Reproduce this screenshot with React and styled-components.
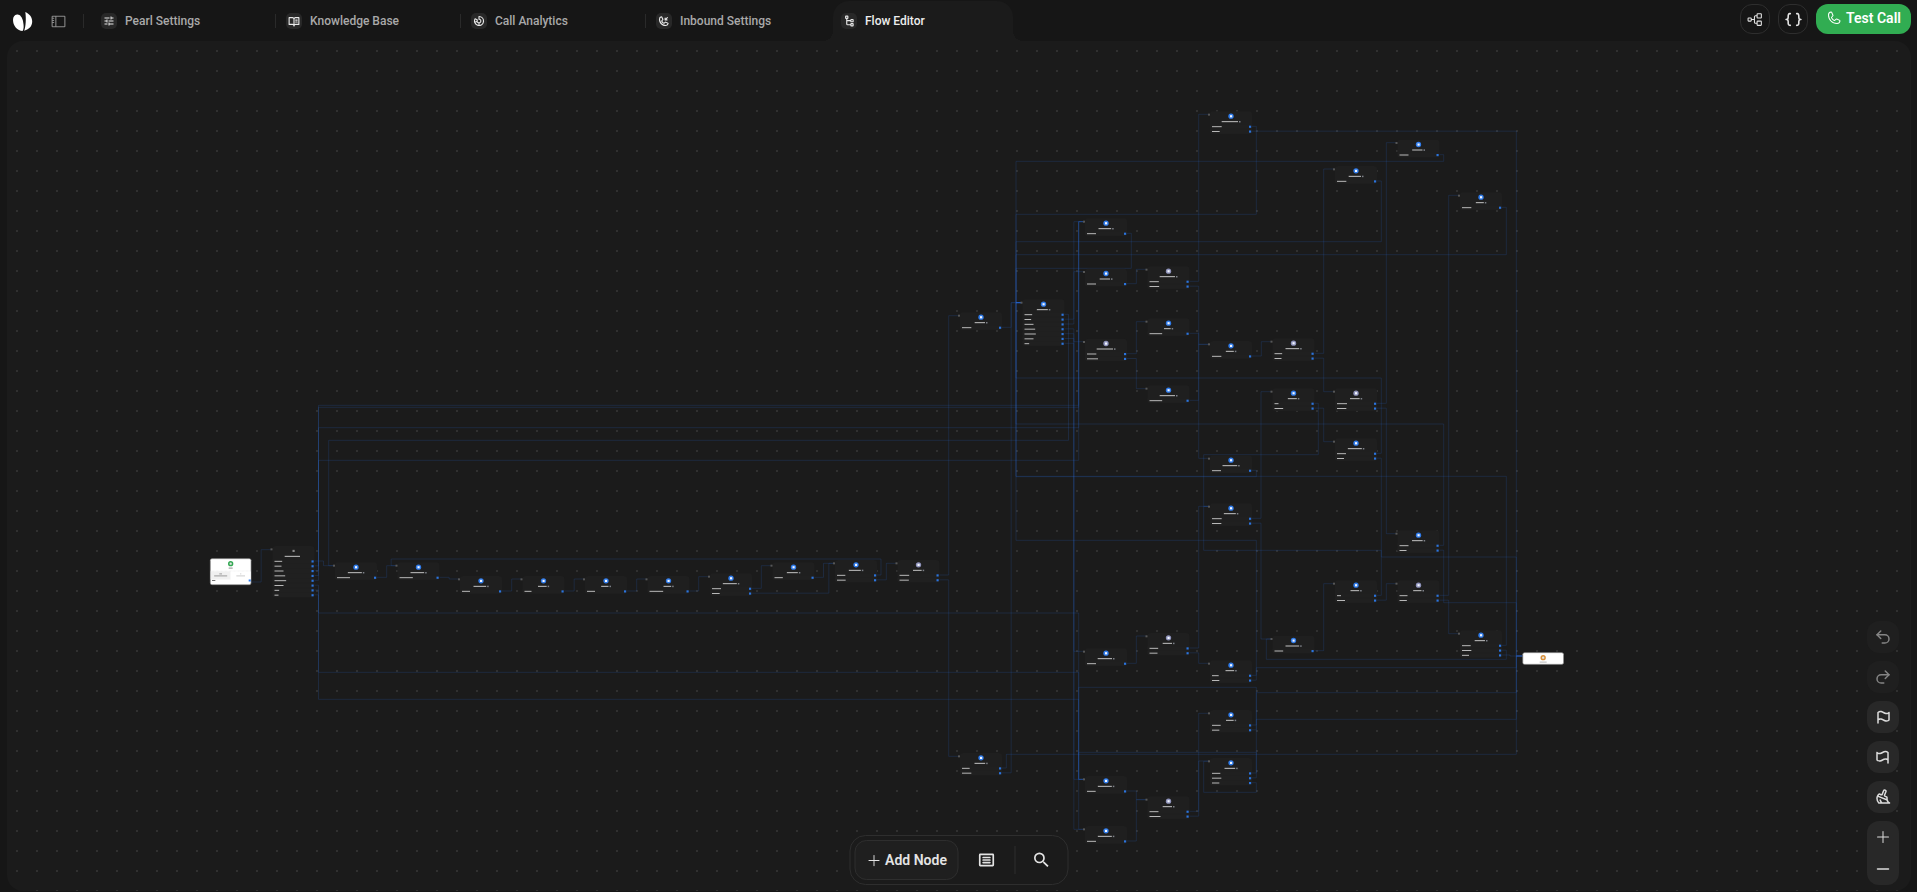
import React from 'react'
import styled, { createGlobalStyle, css } from 'styled-components'
import {
  PiArticleBold,
  PiBookOpenTextBold,
  PiBracketsCurlyBold,
  PiBroomBold,
  PiChartDonutBold,
  PiFlagBold,
  PiMinusBold,
  PiPhone,
  PiPhoneIncomingBold,
  PiPlus,
  PiSidebar,
  PiTreeStructure,
  PiTreeViewBold,
} from 'react-icons/pi'
import { MdSearch, MdTune } from 'react-icons/md'
import { LuRedo2, LuUndo2 } from 'react-icons/lu'

const GlobalStyle = createGlobalStyle`
  * {
    box-sizing: border-box;
  }
  body {
    margin: 0;
    background: #161616;
    color: #e4e4e4;
    font-family: Roboto, 'Liberation Sans', sans-serif;
  }
  button {
    font-family: inherit;
    color: inherit;
    padding: 0;
    border: 0;
    cursor: pointer;
  }
`

const Page = styled.div`
  display: flex;
  flex-direction: column;
  height: 100vh;
  padding: 0 6px 1px 7px;
`

const Header = styled.header`
  display: flex;
  align-items: flex-start;
  height: 41px;
`

const Brand = styled.a`
  display: flex;
  margin: 11px 0 0 5px;
  color: #fff;
`

const SidebarToggle = styled.button`
  display: flex;
  margin: 13px 16px 0 17px;
  background: none;
  color: #8c8c8c;
  font-size: 17px;
`

const Divider = styled.span`
  flex: none;
  width: 1px;
  height: 14px;
  margin-top: 14px;
  background: #2a2a2a;
`

const Tabs = styled.nav`
  display: flex;
  align-items: flex-start;
  margin-left: 9px;
`

const TabGap = styled(Divider)`
  margin-left: 2px;
  margin-right: 2px;
  background: ${p => (p.$hidden ? 'transparent' : '#2a2a2a')};
`

const flare = css`
  content: '';
  position: absolute;
  bottom: 0;
  width: 10px;
  height: 10px;
`

const Tab = styled.a`
  position: relative;
  display: flex;
  align-items: center;
  gap: 8px;
  width: 180px;
  height: 40px;
  margin-top: 1px;
  padding: 0 8px;
  border-radius: 16px 16px 0 0;
  color: #a9a9a9;
  font-size: 12px;
  font-weight: 500;
  text-decoration: none;
  white-space: nowrap;
  ${p =>
    p.$active &&
    css`
      background: #1b1b1b;
      color: #ededed;
      &::before {
        ${flare}
        left: -10px;
        background: radial-gradient(circle at 0 0, transparent 10px, #1b1b1b 10px);
      }
      &::after {
        ${flare}
        right: -10px;
        background: radial-gradient(circle at 100% 0, transparent 10px, #1b1b1b 10px);
      }
    `}
`

const TabIcon = styled.span`
  display: flex;
  align-items: center;
  justify-content: center;
  width: 16px;
  height: 16px;
  border-radius: 5px;
  background: #282828;
  color: #e8e8e8;
  font-size: 12px;
`

const Actions = styled.div`
  display: flex;
  gap: 8px;
  margin: 4px 0 0 auto;
`

const RoundButton = styled.button`
  display: flex;
  align-items: center;
  justify-content: center;
  width: 30px;
  height: 30px;
  border: 1px solid #2e2e2e;
  border-radius: 12px;
  background: #161616;
  font-size: 17px;
`

const CallButton = styled.button`
  display: flex;
  align-items: center;
  justify-content: center;
  gap: 4px;
  width: 95px;
  height: 30px;
  padding-bottom: 2px;
  border-radius: 12px;
  background: #31ad52;
  color: #fff;
  font-size: 14px;
  font-weight: 600;
  svg {
    font-size: 16px;
  }
`

const Canvas = styled.main`
  position: relative;
  flex: 1;
  overflow: hidden;
  border-radius: 16px;
  background-color: #1b1b1b;
  background-image: conic-gradient(from 270deg at 2px 2px, #303030 90deg, transparent 0);
  background-size: 20px 20px;
  background-position: 9px 9px;
`

/* Flow coordinates are six units to the pixel. */
const Viewport = styled.div`
  position: absolute;
  left: 0;
  top: 0;
  transform: translate(-7px, -41px) scale(${1 / 6});
  transform-origin: 0 0;
`

const Edges = styled.svg`
  position: absolute;
  left: 0;
  top: 0;
  fill: none;
  stroke: #2a6fe0;
  stroke-width: 6;
  stroke-opacity: 0.18;
`

const Node = styled.article`
  position: absolute;
  left: ${p => p.$x}px;
  top: ${p => p.$y}px;
  width: 252px;
  border-radius: 20px;
  background: #1f1f1f;
`

const NodeInput = styled.i`
  position: absolute;
  left: -12px;
  top: 14px;
  width: 12px;
  height: 12px;
  background: #565656;
`

const NodeHead = styled.div`
  display: flex;
  flex-direction: column;
  align-items: center;
  gap: 13px;
  height: 76px;
  padding-top: 13px;
`

const NodeBadge = styled.i`
  display: flex;
  align-items: center;
  justify-content: center;
  width: 32px;
  height: 32px;
  border-radius: 50%;
  background: ${p => p.$color};
  &::after {
    content: '';
    width: 13px;
    height: 13px;
    background: ${p => (p.$plain ? '#8a8a8a' : '#f2f6ff')};
  }
`

const NodeTitle = styled.div`
  display: flex;
  align-items: center;
  gap: 6px;
  height: 8px;
  &::before {
    content: '';
    width: ${p => p.$width}px;
    height: 6px;
    background: #c4c4c4;
  }
  &::after {
    content: '';
    width: 9px;
    height: 9px;
    background: #7d8088;
    visibility: ${p => (p.$plain ? 'hidden' : 'visible')};
  }
`

const NodeRow = styled.div`
  display: flex;
  align-items: center;
  justify-content: space-between;
  height: 26px;
  margin-top: 3px;
  padding: 0 5px 0 12px;
  border-radius: 0 0 12px 12px;
  background: #202020;
  &::before {
    content: '';
    width: ${p => p.$width}px;
    height: 6px;
    background: #b8b8b8;
  }
  &::after {
    content: '';
    width: 13px;
    height: 13px;
    background: #2b74dd;
  }
`

const WhiteNode = styled(Node)`
  display: flex;
  flex-direction: column;
  align-items: center;
  width: 248px;
  height: ${p => p.$height}px;
  padding-top: 12px;
  border: 4px solid #8f8f8f;
  border-radius: 12px;
  background: #fff;
`

const Ring = styled.i`
  flex: none;
  width: 32px;
  height: 32px;
  border: 9px solid ${p => p.$color};
  border-radius: 50%;
  background: #e3e3e3;
`

const Line = styled.i`
  flex: none;
  width: ${p => p.$width}px;
  height: 5px;
  margin-top: ${p => p.$gap || 0}px;
  background: ${p => p.$color || '#8a8a8a'};
`

const Modes = styled.div`
  display: flex;
  width: 100%;
  height: 52px;
  margin-top: 14px;
  border-top: 4px dotted #dedede;
`

const Mode = styled.div`
  flex: 1;
  display: flex;
  flex-direction: column;
  align-items: center;
  padding-top: 12px;
  background: ${p => (p.$selected ? '#f0f0f0' : '#fff')};
`

const StartRow = styled.div`
  display: flex;
  align-items: center;
  justify-content: space-between;
  width: 100%;
  padding-left: 8px;
  &::after {
    content: '';
    width: 12px;
    height: 12px;
    background: #2b7bf3;
  }
`

const Controls = styled.div`
  position: absolute;
  right: 12px;
  bottom: 6px;
  display: flex;
  flex-direction: column;
  gap: 8px;
`

const Control = styled.button`
  display: flex;
  align-items: center;
  justify-content: center;
  width: 32px;
  height: 32px;
  border-radius: 12px;
  background: #282828;
  color: #dcdcdc;
  font-size: 16px;
  &:disabled {
    background: #1f1f1f;
    color: #858585;
    font-size: 18px;
  }
`

const ZoomGroup = styled.div`
  border-radius: 12px;
  background: #282828;
  ${Control} {
    background: none;
  }
`

const Toolbar = styled.div`
  position: absolute;
  left: 50%;
  bottom: 6px;
  transform: translateX(-50%);
  display: flex;
  align-items: center;
  height: 50px;
  padding: 4px 0 4px 4px;
  border: 1px solid #2e2e2e;
  border-radius: 16px;
  background: #1b1b1b;
`

const AddButton = styled.button`
  display: flex;
  align-items: center;
  justify-content: center;
  gap: 4px;
  width: 104px;
  height: 40px;
  border: 1px solid #2e2e2e;
  border-radius: 12px;
  background: #1f1f1f;
  font-size: 14px;
  font-weight: 600;
  svg {
    font-size: 15px;
  }
`

const ToolButton = styled.button`
  display: flex;
  align-items: center;
  justify-content: center;
  width: ${p => p.$width}px;
  height: 40px;
  background: none;
  font-size: ${p => p.$size}px;
`

const ToolDivider = styled.span`
  width: 1px;
  height: 28px;
  background: #2e2e2e;
`

const tabs = [
  { name: 'Pearl Settings', icon: <MdTune /> },
  { name: 'Knowledge Base', icon: <PiBookOpenTextBold /> },
  { name: 'Call Analytics', icon: <PiChartDonutBold /> },
  { name: 'Inbound Settings', icon: <PiPhoneIncomingBold /> },
  { name: 'Flow Editor', icon: <PiTreeViewBold />, active: true },
]

const columnX = col => 2010 + 375 * col

// [column, y, title width, widths of the outputs, kind]
const nodes = [
  [-1, 3276, 92, [46, 42, 54, 64, 70, 54, 28, 24], 'plain'],
  [0, 3374, 84, [78]],
  [1, 3374, 82, [80]],
  [2, 3456, 76, [48]],
  [3, 3456, 52, [42]],
  [4, 3456, 44, [48]],
  [5, 3456, 46, [82]],
  [6, 3440, 84, [54, 46]],
  [7, 3374, 66, [50]],
  [8, 3360, 72, [50, 52]],
  [9, 3360, 52, [58, 56], 'check'],
  [10, 1874, 62, [56]],
  [10, 4518, 64, [46, 56]],
  [11, 1796, 66, [46, 40, 54, 64, 68, 54, 28]],
  [12, 1310, 76, [54]],
  [12, 1612, 62, [54]],
  [12, 2032, 98, [56, 66], 'check'],
  [12, 3890, 86, [54]],
  [12, 4656, 84, [52]],
  [12, 4956, 84, [54]],
  [13, 1598, 92, [56, 58], 'check'],
  [13, 1910, 40, [76]],
  [13, 2312, 92, [76]],
  [13, 3798, 56, [52, 48], 'check'],
  [13, 4778, 56, [54, 66], 'check'],
  [14, 668, 98, [58, 46]],
  [14, 2046, 48, [56]],
  [14, 2732, 88, [54]],
  [14, 3020, 72, [58, 56]],
  [14, 3962, 52, [40, 44]],
  [14, 4260, 46, [52, 44]],
  [14, 4548, 64, [50, 56, 44]],
  [15, 2030, 82, [46, 42], 'check'],
  [15, 2330, 54, [24, 52]],
  [15, 3814, 82, [52]],
  [16, 996, 74, [56]],
  [16, 2330, 58, [60, 56], 'check'],
  [16, 2630, 84, [54, 42]],
  [16, 3482, 52, [24, 48]],
  [17, 838, 62, [54]],
  [17, 3182, 64, [54, 42]],
  [17, 3482, 50, [48, 44], 'check'],
  [18, 1154, 48, [56]],
  [18, 3782, 62, [52, 56, 42]],
]

const edges = [
  'M1500 3492H1567V3298H1630',
  'M1880 3366H1941V3394H2004',
  'M1880 3395H1911V2432H6472V1330H6504',
  'M1880 3424H1911V2444H6472V1330H6504',
  'M1880 3453H1911V2566H6472V1330H6504',
  'M1880 3482H1911V2762H6472V1330H6504',
  'M1880 3511H1911V3678H6472V4676H6504',
  'M1880 3540H1911V4034H6472V4676H6504',
  'M1880 3569H1911V4196H6472V4976H6504',
  'M6380 1886H6411V2642H1972V3394H2004',
  'M6380 1915H6443V1330H6504',
  'M6380 1944H6443V1630H6504',
  'M6380 1973H6443V2050H6504',
  'M6380 2002H6443V3908H6504',
  'M6380 2031H6443V4676H6504',
  'M6380 2060H6443V4976H6504',
  'M2250 3464H2320V3394H2380',
  'M2625 3464H2695V3474H2755',
  'M3000 3546H3070V3474H3130',
  'M3375 3546H3445V3474H3505',
  'M3750 3546H3820V3474H3880',
  'M4125 3546H4192V3460H4255',
  'M4500 3530H4568V3394H4630',
  'M4500 3559H4973V3380H5005',
  'M4875 3464H4941V3380H5005',
  'M5250 3450H5286V3354H2347V3394H2380',
  'M5250 3479H5318V3380H5380',
  'M5625 3450H5692V1894H5755',
  'M5625 3479H5692V4538H5755',
  'M6000 1964H6067V1816H6130',
  'M6000 4608H6038V4526H9098V3936H9135',
  'M6000 4637H6067V1816H6130',
  'M7500 758H7538V1286H6096V1816H6130',
  'M8250 1086H8288V1450H6096V1816H6130',
  'M9000 1244H9038V1528H6096V1816H6130',
  'M8625 928H8662V968H6096V1816H6130',
  'M6750 1400H6788V1610H6096V1816H6130',
  'M8250 2720H8288V2268H6096V1816H6130',
  'M8625 3272H8662V2544H6096V1816H6130',
  'M7500 2822H7538V2860H6096V1816H6130',
  'M9000 3872H9038V2858H6096V1816H6130',
  'M7500 4052H7538V3242H6096V1816H6130',
  'M9000 3901H9038V3956H7598V3834H7630',
  'M9000 3930H9060V3936H9135',
  'M6750 1702H6818V1616H6880',
  'M6750 2122H6818V1930H6880',
  'M6750 2151H6818V2332H6880',
  'M7125 1688H7192V686H7255',
  'M7125 1717H7192V2066H7255',
  'M7125 2000H7192V2750H7255',
  'M7125 2402H7192V2066H7255',
  'M7500 787H9098V3936H9135',
  'M7500 2136H7568V2050H7630',
  'M7875 2120H7942V1014H8005',
  'M7875 2149H7942V2350H8005',
  'M7500 3110H7566V2350H7630',
  'M7500 3139H7566V3834H7630',
  'M7875 2420H7910V2728H7222V3038H7255',
  'M7875 2449H7942V2650H8005',
  'M8250 2420H8318V856H8380',
  'M8250 2449H8318V3202H8380',
  'M8250 2749H8288V3342H9098V3936H9135',
  'M8625 3301H8662V3616H9098V3936H9135',
  'M8250 3572H8288V3302H7222V3038H7255',
  'M8250 3601H8318V3502H8380',
  'M8625 3572H8692V1172H8755',
  'M8625 3601H8692V3802H8755',
  'M7875 3904H7942V3502H8005',
  'M6750 3980H6818V3816H6880',
  'M7125 3888H7192V3038H7255',
  'M7125 3917H7192V3980H7255',
  'M7500 4081H7538V4006H9098V3936H9135',
  'M7500 4350H7538V4124H6472V4676H6504',
  'M7500 4379H7538V4156H9098V3936H9135',
  'M7500 4638H7538V4514H6472V4676H6504',
  'M7500 4667H7538V4316H9098V3936H9135',
  'M7500 4696H7538V4754H7222V4568H7255',
  'M6750 4746H6818V4798H6880',
  'M6750 5046H6818V4798H6880',
  'M7125 4868H7192V4280H7255',
  'M7125 4897H7192V4566H7255',
]

const badgeColors = { plain: 'transparent', check: '#8f93bb' }

const Logo = () => (
  <svg width="21" height="21" viewBox="0 0 21 21" fill="currentColor" aria-hidden="true">
    <path d="M5 3.5C7.800 3 10 6 11 10c.9 4.300 1 8.300-.4 10C5.500 19.800 1 15 1 8.700 1 5.700 2.500 4 5 3.500z" />
    <path d="M13.300 1c4.200 2 6.900 5 6.900 9.500 0 4.300-2.700 7.800-8 9.200 1.600-4 2.100-12 1.100-18.700z" />
  </svg>
)

const FlowNode = ({ col, y, title, outputs, kind }) => (
  <Node $x={columnX(col)} $y={y}>
    <NodeInput />
    <NodeHead>
      <NodeBadge $color={badgeColors[kind] || '#2f7bea'} $plain={kind === 'plain'} />
      <NodeTitle $width={title} $plain={kind === 'plain'} />
    </NodeHead>
    {outputs.map((width, i) => (
      <NodeRow key={i} $width={width} />
    ))}
  </Node>
)

const Flow = () => (
  <Viewport>
    <Edges width="10000" height="5400">
      {edges.map(d => (
        <path key={d} d={d} />
      ))}
    </Edges>
    <WhiteNode $x={columnX(-2)} $y={3350} $height={160}>
      <Ring $color="#34a853" />
      <Line $width={24} $gap={8} $color="#777" />
      <Modes>
        <Mode $selected>
          <Line $width={16} />
          <Line $width={78} $gap={7} />
        </Mode>
        <Mode>
          <Line $width={8} $color="#ccc" />
          <Line $width={52} $gap={7} $color="#c4c4c4" />
        </Mode>
      </Modes>
      <StartRow>
        <Line $width={20} $color="#555" />
      </StartRow>
    </WhiteNode>
    {nodes.map(([col, y, title, outputs, kind]) => (
      <FlowNode key={`${col}-${y}`} col={col} y={y} title={title} outputs={outputs} kind={kind} />
    ))}
    <WhiteNode $x={columnX(19)} $y={3914} $height={74}>
      <Ring $color="#d9913c" />
      <Line $width={42} $gap={8} $color="#aaa" />
    </WhiteNode>
  </Viewport>
)

const App = () => (
  <Page>
    <GlobalStyle />
    <Header>
      <Brand href="#" aria-label="Home">
        <Logo />
      </Brand>
      <SidebarToggle aria-label="Toggle sidebar">
        <PiSidebar />
      </SidebarToggle>
      <Divider />
      <Tabs>
        {tabs.map((tab, i) => (
          <React.Fragment key={tab.name}>
            {i > 0 && <TabGap $hidden={tab.active} />}
            <Tab href="#" $active={tab.active}>
              <TabIcon>{tab.icon}</TabIcon>
              {tab.name}
            </Tab>
          </React.Fragment>
        ))}
      </Tabs>
      <Actions>
        <RoundButton aria-label="Nodes">
          <PiTreeStructure />
        </RoundButton>
        <RoundButton aria-label="Variables">
          <PiBracketsCurlyBold />
        </RoundButton>
        <CallButton>
          <PiPhone />
          Test Call
        </CallButton>
      </Actions>
    </Header>
    <Canvas>
      <Flow />
      <Controls>
        <Control aria-label="Undo" disabled>
          <LuUndo2 />
        </Control>
        <Control aria-label="Redo" disabled>
          <LuRedo2 />
        </Control>
        <Control aria-label="Go to start">
          <PiFlagBold />
        </Control>
        <Control aria-label="Go to end">
          <PiFlagBold transform="scale(-1 1)" />
        </Control>
        <Control aria-label="Clean up">
          <PiBroomBold />
        </Control>
        <ZoomGroup>
          <Control aria-label="Zoom in">
            <PiPlus />
          </Control>
          <Control aria-label="Zoom out">
            <PiMinusBold />
          </Control>
        </ZoomGroup>
      </Controls>
      <Toolbar>
        <AddButton>
          <PiPlus />
          Add Node
        </AddButton>
        <ToolButton $width={56} $size={18} aria-label="Notes">
          <PiArticleBold />
        </ToolButton>
        <ToolDivider />
        <ToolButton $width={52} $size={20} aria-label="Search">
          <MdSearch />
        </ToolButton>
      </Toolbar>
    </Canvas>
  </Page>
)

export default App
